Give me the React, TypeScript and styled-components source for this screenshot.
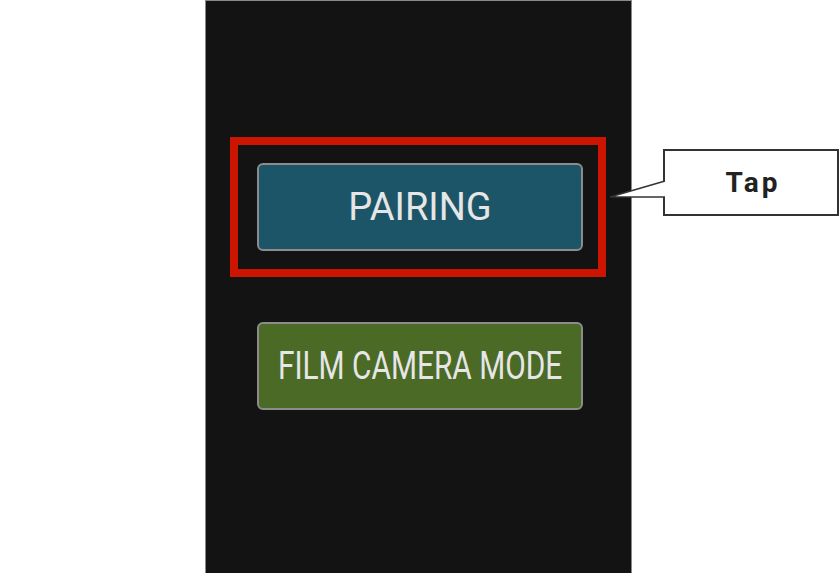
import styled, { createGlobalStyle } from 'styled-components';

const Global = createGlobalStyle`
  html, body {
    margin: 0;
    padding: 0;
    background: #fff;
    overflow: hidden;
  }
  body {
    font-family: Roboto, 'Noto Sans', sans-serif;
  }
`;

const Page = styled.div`
  position: relative;
  width: 840px;
  height: 573px;
  display: flex;
  padding-left: 205px;
  box-sizing: border-box;
`;

const Phone = styled.div`
  width: 427px;
  height: 600px;
  box-sizing: border-box;
  background: #131313;
  border: 1px solid #8a8a8a;
  border-bottom: none;
  display: flex;
  flex-direction: column;
  align-items: flex-start;
  padding-top: 136px;
`;

const Highlight = styled.div`
  margin-left: 24px;
  width: 376px;
  height: 140px;
  box-sizing: border-box;
  border: 8px solid #cc1500;
  padding: 18px 15px 18px 19px;
  display: flex;
`;

const ModeButton = styled.div<{ $bg: string; $squeeze?: number }>`
  width: 326px;
  height: 88px;
  flex: none;
  box-sizing: border-box;
  background: ${(p) => p.$bg};
  border: 2px solid #8c8c8c;
  border-radius: 6px;
  display: flex;
  align-items: center;
  justify-content: center;
  color: #e6e6e6;
  font-size: 38px;
  font-weight: 400;
  white-space: nowrap;

  span {
    display: inline-block;
    transform: scaleX(${(p) => p.$squeeze ?? 1});
  }
`;

const FilmRow = styled.div`
  margin-top: 45px;
  margin-left: 51px;
`;

const Callout = styled.div`
  position: absolute;
  left: 663px;
  top: 149px;
  width: 176px;
  height: 67px;
  box-sizing: border-box;
  background: #fff;
  border: 2px solid #333;
  display: flex;
  align-items: center;
  justify-content: center;
  padding-left: 4px;
  color: #222;
  font-size: 28px;
  font-weight: 700;
  letter-spacing: 3px;

  svg {
    position: absolute;
    left: -60px;
    top: -2px;
    overflow: visible;
  }
`;

export default function App() {
  return (
    <>
      <Global />
      <Page>
        <Phone>
          <Highlight>
            <ModeButton $bg="#1d5568">
              <span>PAIRING</span>
            </ModeButton>
          </Highlight>
          <FilmRow>
            <ModeButton $bg="#4a6a26" $squeeze={0.785}>
              <span>FILM CAMERA MODE</span>
            </ModeButton>
          </FilmRow>
        </Phone>

        <Callout>
          Tap
          <svg width="62" height="67" viewBox="0 0 62 67">
            <polygon points="5,48 60,32 60,48" fill="#fff" />
            <rect x="56" y="33" width="6" height="14" fill="#fff" />
            <polyline points="60,32 5,48 60,48" fill="none" stroke="#333" strokeWidth="1.6" />
          </svg>
        </Callout>
      </Page>
    </>
  );
}
